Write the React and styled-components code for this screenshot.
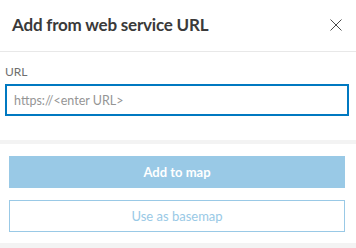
import React from 'react'
import styled, { createGlobalStyle } from 'styled-components'

const GlobalStyle = createGlobalStyle`
  html, body {
    margin: 0;
    padding: 0;
    background: #ffffff;
  }
  body {
    font-family: Lato, "Open Sans", "Liberation Sans", sans-serif;
    color: #323232;
  }
`

const App = () => {
  return (
    <Panel>
      <GlobalStyle />
      <Header>
        <Title>Add from web service URL</Title>
        <CloseButton aria-label="Close">
          <svg width="12" height="12" viewBox="0 0 12 12">
            <path d="M0.5 0.5 L11.5 11.5 M11.5 0.5 L0.5 11.5" stroke="#4a4a4a" strokeWidth="1" fill="none" />
          </svg>
        </CloseButton>
      </Header>

      <Content>
        <Label htmlFor="url">URL</Label>
        <UrlInput id="url" placeholder="https://<enter URL>" />
      </Content>

      <Footer>
        <Button primary disabled>Add to map</Button>
        <Button disabled>Use as basemap</Button>
      </Footer>
    </Panel>
  )
}

const Panel = styled.div`
  width: 356px;
  height: 248px;
  display: flex;
  flex-direction: column;
  background: #f3f3f3;
  overflow: hidden;
`

const Header = styled.div`
  height: 52px;
  box-sizing: border-box;
  background: #ffffff;
  border-bottom: 1px solid #e8e8e8;
  display: flex;
  align-items: center;
  justify-content: space-between;
  padding: 0 12px 2px 12px;
  flex-shrink: 0;
`

const Title = styled.h2`
  margin: 0;
  font-size: 17px;
  font-weight: 700;
  color: #3a3a3a;
  letter-spacing: -0.2px;
`

const CloseButton = styled.button`
  border: none;
  background: none;
  padding: 0;
  margin-right: 2px;
  width: 12px;
  height: 12px;
  display: flex;
  cursor: pointer;
`

const Content = styled.div`
  background: #ffffff;
  height: 88px;
  box-sizing: border-box;
  padding: 12px 7px 0 5px;
  display: flex;
  flex-direction: column;
  flex-shrink: 0;
`

const Label = styled.label`
  font-size: 12px;
  color: #6e6e6e;
  line-height: 16px;
  margin-bottom: 4px;
`

const UrlInput = styled.input`
  box-sizing: border-box;
  width: 100%;
  height: 32px;
  border: 2px solid #0079c1;
  padding: 0 7px;
  font-family: Lato, "Open Sans", "Liberation Sans", sans-serif;
  font-size: 12.5px;
  color: #323232;
  outline: none;
  &::placeholder {
    color: #959595;
  }
`

const Footer = styled.div`
  margin-top: 4px;
  background: #ffffff;
  height: 99px;
  box-sizing: border-box;
  padding: 12px 11px 0 9px;
  display: flex;
  flex-direction: column;
  gap: 12px;
  flex-shrink: 0;
`

const Button = styled.button`
  height: 32px;
  box-sizing: border-box;
  width: 100%;
  font-family: Lato, "Open Sans", "Liberation Sans", sans-serif;
  font-size: 13px;
  font-weight: ${p => (p.primary ? 700 : 400)};
  border: 1px solid #99c9e6;
  background: ${p => (p.primary ? '#99c9e6' : '#ffffff')};
  color: ${p => (p.primary ? '#ffffff' : '#99c9e6')};
  cursor: default;
`

export default App
